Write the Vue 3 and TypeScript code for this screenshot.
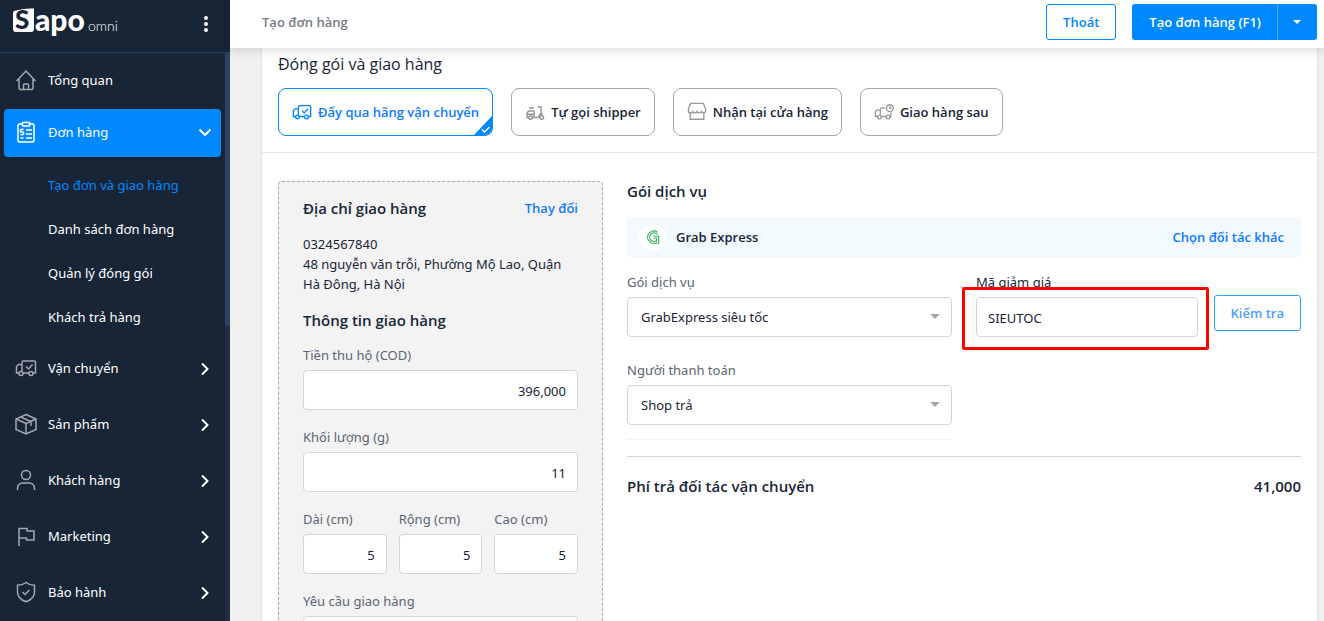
<script setup lang="ts">
import { ref } from 'vue'

interface Icon {
  w: number
  h: number
  paths: string[]
}

const circle = (cx: number, cy: number, r: number): string =>
  `M${cx - r} ${cy}a${r} ${r} 0 1 0 ${2 * r} 0a${r} ${r} 0 1 0 ${-2 * r} 0`

const truckBody = [
  'M7 12V3.5A1.5 1.5 0 0 1 8.500 2H19.500a1 1 0 0 1 1 1V14h-2.500',
  'M7 5.500H3.500L1.500 7.500V14H4M8 14h6',
  circle(6, 14.5, 2),
  circle(16, 14.5, 2)
]

const icons: Record<string, Icon> = {
  home: { w: 22, h: 22, paths: ['M1.500 12L11 2L20.500 12M4 10v9a1.500 1.500 0 0 0 1.500 1.500h11A1.500 1.500 0 0 0 18 19v-9', 'M8.500 20.500v-4.500a1 1 0 0 1 1-1h3a1 1 0 0 1 1 1v4.500'] },
  order: { w: 22, h: 22, paths: ['M7 3H4.500A1.500 1.500 0 0 0 3 4.500v15A1.500 1.500 0 0 0 4.500 21h13a1.500 1.500 0 0 0 1.500-1.500v-15A1.500 1.500 0 0 0 17.500 3H15', 'M7.500 1.500h7v3.500h-7z', 'M11 9h6M11 13h6M11 17h6', 'M8.500 8.500H6.500a1.200 1.200 0 0 0 0 2.500h1a1.200 1.200 0 0 1 0 2.500H5.500M7 7.500v1M7 13.500v1M5.500 17h3'] },
  truck: { w: 22, h: 18, paths: [...truckBody, 'M11 7.500l2.500 2.500 4-4.500'] },
  box: { w: 22, h: 22, paths: ['M11 1.500L21 6v10.500L11 21 1 16.500V6z', 'M1 6l10 4.500L21 6M11 10.500V21', 'M5.500 4l10.500 4.500V13'] },
  user: { w: 22, h: 22, paths: [circle(11, 6, 4.5), 'M2.500 21v-2a5 5 0 0 1 5-5h7a5 5 0 0 1 5 5v2'] },
  flag: { w: 22, h: 22, paths: ['M4 21V3.500h8v2.500h7v9h-7.500V13H4'] },
  shield: { w: 22, h: 22, paths: ['M11 1.500c2.500 2 5.500 2.800 8.500 2.800V11c0 4.500-3.500 8-8.500 9.800C6 19 2.500 15.500 2.500 11V4.300c3 0 6-.8 8.500-2.800z', 'M7.500 11l2.500 2.500 4.500-4.500'] },
  scooter: { w: 20, h: 20, paths: ['M4 6h5', 'M3.500 15.500H2V12a3 3 0 0 1 3-3H9V15.500H7.500M2.500 12.200H9', 'M9 15.500h4l3-4.500', 'M12.500 5h3.500v3M16 8l1 5.500', circle(5.5, 15.5, 1.8), circle(16.8, 15.5, 1.8)] },
  store: { w: 22, h: 22, paths: ['M4 1.500h14l2.500 6v2a2.300 2.300 0 0 1-4.600 0 2.400 2.400 0 0 1-4.800 0 2.400 2.400 0 0 1-4.800 0 2.300 2.300 0 0 1-4.800 0v-2z', 'M3.500 11.500v7.500h15v-7.500'] },
  later: { w: 22, h: 18, paths: ['M7 12V5.500A1 1 0 0 1 8 4.500h4.500M18.500 9.500V14H17.500M7 7H3L1.500 8.500V14H4M8 14h5', circle(6, 14.5, 2), circle(15.5, 14.5, 2), circle(17.5, 4.8, 3.8), 'M17.500 2.500v2.500h2'] }
}

const subItems = ['Tạo đơn và giao hàng', 'Danh sách đơn hàng', 'Quản lý đóng gói', 'Khách trả hàng']
const menu = [
  { icon: 'truck', label: 'Vận chuyển' },
  { icon: 'box', label: 'Sản phẩm' },
  { icon: 'user', label: 'Khách hàng' },
  { icon: 'flag', label: 'Marketing' },
  { icon: 'shield', label: 'Bảo hành' }
]
const methods = [
  { icon: 'truck', label: 'Đẩy qua hãng vận chuyển' },
  { icon: 'scooter', label: 'Tự gọi shipper' },
  { icon: 'store', label: 'Nhận tại cửa hàng' },
  { icon: 'later', label: 'Giao hàng sau' }
]
const method = ref(0)
const cod = ref('396,000')
const weight = ref('11')
const sizes = ref([
  { id: 'length', label: 'Dài (cm)', value: '5' },
  { id: 'width', label: 'Rộng (cm)', value: '5' },
  { id: 'height', label: 'Cao (cm)', value: '5' }
])
const note = ref('')
const coupon = ref('SIEUTOC')
</script>

<template>
  <div class="app">
    <aside class="sidebar">
      <div class="brand">
        <svg class="logo" viewBox="0 0 110 46" role="img" aria-label="Sapo omni">
          <path d="M4 9.500Q13 7 22 7.500V28a3 3 0 0 1-3 3H4a3 3 0 0 1-3-3V12.500a3 3 0 0 1 3-3z" fill="#fff" />
          <text class="logo-s" x="3" y="28">S</text>
          <text class="logo-main" x="23" y="30">apo</text>
          <text class="logo-sub" x="76" y="30">omni</text>
        </svg>
        <button class="more" type="button" aria-label="Menu"><i></i><i></i><i></i></button>
      </div>
      <div class="side-scroll">
        <nav class="nav">
          <a class="item" href="#">
            <svg class="icon" viewBox="0 0 22 22"><path v-for="d in icons.home.paths" :key="d" :d="d" /></svg>
            <span>Tổng quan</span>
          </a>
          <a class="item active" href="#">
            <svg class="icon" viewBox="0 0 22 22"><path v-for="d in icons.order.paths" :key="d" :d="d" /></svg>
            <span>Đơn hàng</span>
            <svg class="chevron" viewBox="0 0 14 14"><path d="M1.500 4.500L7 10l5.500-5.500" /></svg>
          </a>
          <div class="sub">
            <a v-for="(s, i) in subItems" :key="s" href="#" :class="{ current: i === 0 }">{{ s }}</a>
          </div>
          <div class="rest">
            <a v-for="m in menu" :key="m.label" class="item" href="#">
              <svg class="icon" :viewBox="`0 0 ${icons[m.icon].w} ${icons[m.icon].h}`">
                <path v-for="d in icons[m.icon].paths" :key="d" :d="d" />
              </svg>
              <span>{{ m.label }}</span>
              <svg class="chevron" viewBox="0 0 14 14"><path d="M4 2.500L9.500 8l-5.500 5.500" /></svg>
            </a>
          </div>
        </nav>
        <div class="track"><div class="thumb"></div></div>
      </div>
    </aside>

    <div class="page">
      <header class="topbar">
        <h1>Tạo đơn hàng</h1>
        <button class="btn outline" type="button">Thoát</button>
        <div class="split">
          <button class="btn main" type="button">Tạo đơn hàng (F1)</button>
          <button class="btn drop" type="button" aria-label="Tùy chọn khác">
            <svg viewBox="0 0 10 6"><path d="M1 1h8L5 5z" /></svg>
          </button>
        </div>
      </header>

      <main class="content">
        <section class="card">
          <div class="card-head">
            <h2>Đóng gói và giao hàng</h2>
            <div class="methods">
              <button
                v-for="(m, i) in methods"
                :key="m.label"
                type="button"
                class="method"
                :class="{ selected: method === i }"
                @click="method = i"
              >
                <svg class="method-icon" :viewBox="`0 0 ${icons[m.icon].w} ${icons[m.icon].h}`">
                  <path v-for="d in icons[m.icon].paths" :key="d" :d="d" />
                </svg>
                <span>{{ m.label }}</span>
                <svg v-if="method === i" class="corner" viewBox="0 0 18 19">
                  <path d="M18 0v19H0z" fill="#0088ff" />
                  <path d="M8 13.500l2.500 2.500 5-5" fill="none" stroke="#fff" stroke-width="1.300" />
                </svg>
              </button>
            </div>
          </div>

          <div class="card-body">
            <div class="address">
              <div class="row">
                <h3>Địa chỉ giao hàng</h3>
                <a class="link" href="#">Thay đổi</a>
              </div>
              <p class="lines">0324567840<br />48 nguyễn văn trỗi, Phường Mộ Lao, Quận Hà Đông, Hà Nội</p>
              <h3 class="info-title">Thông tin giao hàng</h3>
              <div class="fields">
                <div class="field">
                  <label for="cod">Tiền thu hộ (COD)</label>
                  <input id="cod" v-model="cod" class="num" type="text" />
                </div>
                <div class="field">
                  <label for="weight">Khối lượng (g)</label>
                  <input id="weight" v-model="weight" class="num" type="text" />
                </div>
                <div class="sizes">
                  <div v-for="s in sizes" :key="s.id" class="field">
                    <label :for="s.id">{{ s.label }}</label>
                    <input :id="s.id" v-model="s.value" class="num" type="text" />
                  </div>
                </div>
                <div class="field">
                  <label for="note">Yêu cầu giao hàng</label>
                  <input id="note" v-model="note" type="text" />
                </div>
              </div>
            </div>

            <div class="service">
              <h3>Gói dịch vụ</h3>
              <div class="partner">
                <span class="avatar">
                  <svg viewBox="0 0 16 16">
                    <path d="M12.500 3.200A6.200 6.200 0 1 0 8 14.300h5.700V7.300H8.500M12.500 5.700A4.300 4.300 0 1 0 8 12.300h3.500V9.300H8.500" />
                  </svg>
                </span>
                <span class="partner-name">Grab Express</span>
                <a class="link" href="#">Chọn đối tác khác</a>
              </div>
              <div class="service-grid">
                <div class="field">
                  <label for="plan">Gói dịch vụ</label>
                  <div class="select">
                    <select id="plan"><option>GrabExpress siêu tốc</option></select>
                    <svg viewBox="0 0 10 6"><path d="M0 1h10L5 6z" /></svg>
                  </div>
                </div>
                <div class="coupon">
                  <div class="field">
                    <label class="dark" for="coupon">Mã giảm giá</label>
                    <div class="highlight"><input id="coupon" v-model="coupon" type="text" /></div>
                  </div>
                  <button class="btn outline check" type="button">Kiểm tra</button>
                </div>
                <div class="field payer">
                  <label for="payer">Người thanh toán</label>
                  <div class="select">
                    <select id="payer"><option>Shop trả</option></select>
                    <svg viewBox="0 0 10 6"><path d="M0 1h10L5 6z" /></svg>
                  </div>
                </div>
              </div>
              <div class="fee">
                <span>Phí trả đối tác vận chuyển</span>
                <span>41,000</span>
              </div>
            </div>
          </div>
        </section>
      </main>
    </div>
  </div>
</template>

<style>
body {
  margin: 0;
  overflow: hidden;
}
</style>

<style scoped>
* {
  box-sizing: border-box;
}
.app {
  display: flex;
  height: 100vh;
  overflow: hidden;
  font: 400 13px/20px "Noto Sans", "Open Sans", sans-serif;
  color: #182537;
}
a {
  color: inherit;
  text-decoration: none;
}
button,
input,
select {
  font: inherit;
  color: inherit;
  margin: 0;
}
h1,
h2,
h3,
p {
  margin: 0;
}
h1,
h2,
h3,
.btn,
.method,
.link,
.partner-name,
.fee {
  font-family: "Open Sans", "Noto Sans", sans-serif;
}
svg {
  flex: none;
}

.sidebar {
  flex: none;
  width: 230px;
  display: flex;
  flex-direction: column;
  background: #182537;
  color: #fff;
}
.brand {
  flex: none;
  height: 53px;
  padding: 0 14px 5px 12px;
  border-bottom: 1px solid #2a4365;
  display: flex;
  align-items: center;
  justify-content: space-between;
}
.logo {
  width: 110px;
  height: 46px;
  overflow: visible;
}
.logo text {
  font-family: Lato, sans-serif;
  fill: #fff;
}
.logo .logo-s {
  font-size: 26px;
  font-weight: 900;
  fill: #182537;
}
.logo .logo-main {
  font-size: 30px;
  font-weight: 900;
}
.logo .logo-sub {
  font-size: 14px;
  font-weight: 300;
}
.more {
  display: flex;
  flex-direction: column;
  gap: 2px;
  padding: 0 8px;
  border: 0;
  background: none;
}
.more i {
  width: 4px;
  height: 4px;
  border-radius: 50%;
  background: #fff;
}
.side-scroll {
  flex: 1;
  min-height: 0;
  display: flex;
}
.nav {
  flex: 1;
  padding: 4px 4px 0;
  overflow: hidden;
}
.item {
  display: flex;
  align-items: center;
  height: 48px;
  padding: 0 9px 2px 11px;
  gap: 11px;
  border-radius: 4px;
}
.item span {
  flex: 1;
}
.active {
  margin-top: 4px;
  background: #0088ff;
}
.icon {
  width: 22px;
  height: 22px;
}
.icon path {
  fill: none;
  stroke: #a3a8af;
  stroke-width: 1.5;
}
.active .icon path {
  stroke: #fff;
}
.chevron {
  width: 14px;
  height: 14px;
}
.chevron path {
  fill: none;
  stroke: #fff;
  stroke-width: 2;
}
.sub {
  padding: 6px 0 6px 44px;
}
.sub a {
  display: block;
  line-height: 44px;
}
.sub .current {
  color: #0088ff;
}
.rest {
  display: grid;
  gap: 8px;
}
.track {
  width: 5px;
  background: #222f42;
}
.thumb {
  height: 48%;
  border-radius: 0 0 3px 3px;
  background: #2c4263;
}

.page {
  flex: 1;
  min-width: 0;
  display: flex;
  flex-direction: column;
  background: #eff1f1;
}
.topbar {
  flex: none;
  height: 48px;
  padding: 0 7px 4px 32px;
  display: flex;
  align-items: center;
  background: #fff;
  box-shadow: 0 2px 10px rgba(0, 0, 0, 0.15);
  z-index: 1;
}
.topbar h1 {
  flex: 1;
  font-size: 13px;
  font-weight: 600;
  color: #747c87;
}
.btn {
  height: 36px;
  padding: 0 16px;
  border: 1px solid #0088ff;
  border-radius: 3px;
  background: #fff;
  color: #0088ff;
  font-weight: 600;
  white-space: nowrap;
}
.split {
  display: flex;
  margin-left: 16px;
}
.main,
.drop {
  background: #0088ff;
  color: #fff;
}
.main {
  border-radius: 3px 0 0 3px;
  border-right: 0;
}
.drop {
  width: 40px;
  padding: 0 14px;
  border-radius: 0 3px 3px 0;
  border-left-color: #4dacff;
}
.drop svg {
  display: block;
  width: 10px;
  height: 6px;
  fill: #fff;
}

.content {
  flex: 1;
  min-height: 0;
  padding: 0 7px 0 32px;
  overflow: hidden;
}
.card {
  background: #fff;
  box-shadow: 0 0 2px rgba(0, 0, 0, 0.15);
}
.card-head {
  padding: 4px 16px 16px;
  border-bottom: 1px solid #e4e6e8;
}
.card-head h2 {
  font-size: 16px;
  font-weight: 400;
  line-height: 24px;
}
.methods {
  display: flex;
  gap: 18px;
  margin-top: 12px;
}
.method {
  position: relative;
  display: flex;
  align-items: center;
  gap: 6px;
  height: 48px;
  padding: 0 13px;
  overflow: hidden;
  border: 1px solid #a3a8af;
  border-radius: 8px;
  background: #fff;
  font-weight: 600;
  white-space: nowrap;
}
.method-icon {
  width: 20px;
  height: 20px;
}
.method-icon path {
  fill: none;
  stroke: #999;
  stroke-width: 1.5;
}
.selected {
  border-color: #0088ff;
  color: #0f7bff;
}
.selected .method-icon path {
  stroke: #0088ff;
}
.corner {
  position: absolute;
  right: 0;
  bottom: 0;
  width: 18px;
  height: 19px;
}

.card-body {
  display: grid;
  grid-template-columns: 325fr 674fr;
  gap: 24px;
  padding: 28px 16px 24px;
}
h3 {
  font-size: 15px;
  font-weight: 600;
  line-height: 24px;
}
.link {
  color: #0f7bff;
  font-weight: 600;
}
.address {
  padding: 14px 24px 24px;
  border: 1px dashed #a3a8af;
  border-radius: 4px;
  background: #f3f3f3;
}
.row {
  display: flex;
  align-items: center;
  justify-content: space-between;
}
.lines {
  margin-top: 14px;
  padding-right: 8px;
}
.info-title {
  margin-top: 14px;
}
.fields {
  display: grid;
  gap: 17px;
  margin-top: 13px;
}
.sizes {
  display: grid;
  grid-template-columns: repeat(3, 1fr);
  gap: 12px;
}
.field {
  display: grid;
  gap: 5px;
  min-width: 0;
}
label {
  color: #5b6573;
}
label.dark {
  color: #182537;
}
input,
select {
  display: block;
  width: 100%;
  height: 40px;
  padding: 2px 11px 0;
  border: 1px solid #d3d5d7;
  border-radius: 4px;
  background: #fff;
  outline: none;
}
.num {
  text-align: right;
}
.select {
  display: grid;
  align-items: center;
}
.select select {
  grid-area: 1 / 1;
  padding: 0 32px 0 13px;
  appearance: none;
}
.select svg {
  grid-area: 1 / 1;
  justify-self: end;
  width: 10px;
  height: 6px;
  margin: 0 12px 2px 0;
  fill: #a3a8af;
  pointer-events: none;
}
.service h3 {
  line-height: 20px;
}
.partner {
  display: flex;
  align-items: center;
  height: 40px;
  margin-top: 16px;
  padding: 0 17px 0 12px;
  border-radius: 3px;
  background: #f2f9ff;
}
.avatar {
  display: grid;
  place-items: center;
  width: 27px;
  height: 27px;
  border-radius: 50%;
  background: #fff;
}
.avatar svg {
  width: 16px;
  height: 16px;
}
.avatar path {
  fill: none;
  stroke: #2fb35c;
  stroke-width: 1.1;
}
.partner-name {
  flex: 1;
  margin-left: 10px;
  font-weight: 600;
}
.service-grid {
  display: grid;
  grid-template-columns: 1fr 1fr;
  gap: 23px 24px;
  margin-top: 15px;
}
.coupon {
  display: grid;
  grid-template-columns: 1fr auto;
  gap: 16px;
}
.check {
  align-self: end;
  margin-bottom: 6px;
  border-color: #339fff;
  color: #4c9fff;
}
.highlight {
  position: relative;
}
.highlight::after {
  content: "";
  position: absolute;
  inset: -10px -11px -13px -14px;
  border: 3px solid #f00;
  border-radius: 2px;
  pointer-events: none;
}
.payer {
  padding-bottom: 14px;
  border-bottom: 1px solid #f1f2f3;
}
.fee {
  display: flex;
  justify-content: space-between;
  margin-top: 16px;
  padding-top: 17px;
  border-top: 1px solid #d3d5d7;
  font-size: 15px;
  font-weight: 600;
  line-height: 24px;
}
</style>
